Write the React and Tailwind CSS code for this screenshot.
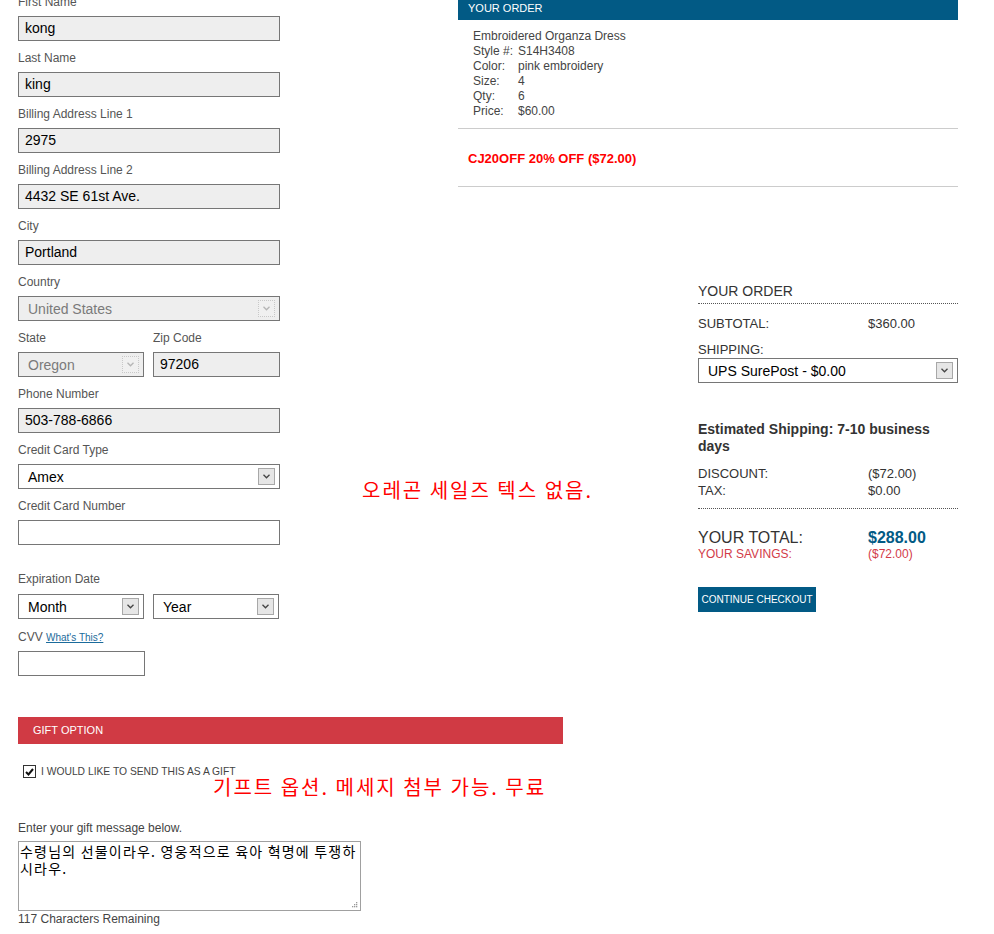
import React from 'react';

const font = { fontFamily: '"Liberation Sans", Arial, "Noto Sans CJK KR", sans-serif' };
const krFont = { fontFamily: '"Noto Sans CJK KR", sans-serif' };

const Arrow = ({ light }) => (
  <span
    className={`w-[17px] h-[17px] flex items-center justify-center border ${
      light ? 'border-dotted border-[#c8c8c8] bg-[#f0f0f0]' : 'border-[#a8a8a8] bg-[#e6e6e6]'
    }`}
  >
    <svg width="7" height="5" viewBox="0 0 7 5">
      <path d="M0.5 0.8 L3.5 3.8 L6.5 0.8" fill="none" stroke={light ? '#b5b5b5' : '#444'} strokeWidth="1.3" />
    </svg>
  </span>
);

const Field = ({ label, children, className = '' }) => (
  <div className={`mb-[9px] ${className}`}>
    <div className="h-4 leading-4 mb-[6px] text-[12px] text-[#555]">{label}</div>
    {children}
  </div>
);

const TextBox = ({ value, filled = true, className = '' }) => (
  <div
    className={`h-[25px] border border-[#767676] flex items-center px-[6px] text-[14px] text-black ${
      filled ? 'bg-[#eeeeee]' : 'bg-white'
    } ${className}`}
  >
    {value}
  </div>
);

const SelectBox = ({ value, disabled, className = '' }) => (
  <div
    className={`h-[25px] border border-[#767676] flex items-center pl-[9px] pr-[4px] text-[14px] ${
      disabled ? 'bg-[#eeeeee] text-[#7a7a7a]' : 'bg-white text-black'
    } ${className}`}
  >
    <span className="flex-1 pt-[1px]">{value}</span>
    <Arrow light={disabled} />
  </div>
);

const Row = ({ label, value, className = '' }) => (
  <div className={`flex text-[13px] leading-[17px] text-[#333] ${className}`}>
    <span className="w-[170px]">{label}</span>
    <span>{value}</span>
  </div>
);

export default function App() {
  return (
    <div className="relative w-[994px] min-h-[934px] bg-white overflow-hidden" style={font}>
      <div className="flex">
        {/* left: billing form */}
        <div className="ml-[18px] w-[262px] mt-[-6px]">
          <Field label="First Name"><TextBox value="kong" /></Field>
          <Field label="Last Name"><TextBox value="king" /></Field>
          <Field label="Billing Address Line 1"><TextBox value="2975" /></Field>
          <Field label="Billing Address Line 2"><TextBox value="4432 SE 61st Ave." /></Field>
          <Field label="City"><TextBox value="Portland" /></Field>
          <Field label="Country"><SelectBox value="United States" disabled /></Field>
          <div className="flex gap-[9px]">
            <Field label="State" className="w-[126px]"><SelectBox value="Oregon" disabled /></Field>
            <Field label="Zip Code" className="w-[127px]"><TextBox value="97206" /></Field>
          </div>
          <Field label="Phone Number"><TextBox value="503-788-6866" /></Field>
          <Field label="Credit Card Type"><SelectBox value="Amex" /></Field>
          <Field label="Credit Card Number" className="mb-[26px]"><TextBox value="" filled={false} /></Field>
          <div className="mb-[10px]">
            <div className="h-4 leading-4 mb-[7px] text-[12px] text-[#555]">Expiration Date</div>
            <div className="flex gap-[9px]">
              <SelectBox value="Month" className="w-[126px] h-[24px]" />
              <SelectBox value="Year" className="w-[126px] h-[24px]" />
            </div>
          </div>
          <div>
            <div className="h-4 leading-4 mb-[6px] text-[12px] text-[#555]">
              CVV{' '}
              <a href="#" className="text-[10px] text-[#1b6b9b] underline">What's This?</a>
            </div>
            <TextBox value="" filled={false} className="w-[127px]" />
          </div>
        </div>

        {/* right: order */}
        <div className="ml-[178px] w-[500px]">
          <div className="h-[20px] bg-[#025a85] text-white text-[11px] leading-[16px] pl-[10px]">YOUR ORDER</div>
          <div className="pl-[15px] pt-[9px] pb-[9px] text-[12px] leading-[15px] text-[#444] border-b border-[#cccccc]">
            <div>Embroidered Organza Dress</div>
            {[
              ['Style #:', 'S14H3408'],
              ['Color:', 'pink embroidery'],
              ['Size:', '4'],
              ['Qty:', '6'],
              ['Price:', '$60.00'],
            ].map(([k, v]) => (
              <div key={k} className="flex">
                <span className="w-[45px]">{k}</span>
                <span>{v}</span>
              </div>
            ))}
          </div>
          <div className="pl-[10px] pt-[22px] pb-[19px] text-[13px] leading-4 font-bold text-[#ff0000] border-b border-[#cccccc]">
            CJ20OFF 20% OFF ($72.00)
          </div>

          <div className="ml-[240px] w-[260px] mt-[96px]">
            <div className="text-[14px] leading-[17px] text-[#333] pb-[3px] border-b border-dotted border-[#555]">YOUR ORDER</div>
            <Row label="SUBTOTAL:" value="$360.00" className="mt-[11px]" />
            <div className="mt-[10px] text-[13px] leading-4 text-[#333]">SHIPPING:</div>
            <SelectBox value="UPS SurePost - $0.00" className="h-[24px]" />
            <div className="mt-[38px] text-[14px] leading-[17px] font-bold text-[#333]">
              Estimated Shipping: 7-10 business days
            </div>
            <div className="mt-[10px] pb-[9px] border-b border-dotted border-[#555]">
              <Row label="DISCOUNT:" value="($72.00)" />
              <Row label="TAX:" value="$0.00" />
            </div>
            <div className="mt-[19px] flex items-end h-[19px] text-[#333]">
              <span className="w-[170px] text-[16px] leading-[19px]">YOUR TOTAL:</span>
              <span className="text-[16px] leading-[19px] font-bold text-[#025a85]">$288.00</span>
            </div>
            <div className="flex text-[12px] leading-[14px] text-[#d23b48]">
              <span className="w-[170px]">YOUR SAVINGS:</span>
              <span>($72.00)</span>
            </div>
            <button className="mt-[26px] h-[25px] w-[118px] bg-[#025a85] text-white text-[10px] whitespace-nowrap">
              CONTINUE CHECKOUT
            </button>
          </div>
        </div>
      </div>

      {/* gift option */}
      <div className="ml-[18px] mt-[41px]">
        <div className="w-[545px] h-[27px] bg-[#d03a44] text-white text-[11px] leading-[27px] pl-[15px]">GIFT OPTION</div>
        <div className="mt-[21px] ml-[5px] flex items-center gap-[5px] h-[13px]">
          <span className="w-[13px] h-[13px] border border-[#333] bg-white flex items-center justify-center">
            <svg width="9" height="8" viewBox="0 0 9 8">
              <path d="M1 4 L3.5 6.5 L8 1" fill="none" stroke="#111" strokeWidth="2" />
            </svg>
          </span>
          <span className="text-[10.3px] leading-[13px] text-[#444]">I WOULD LIKE TO SEND THIS AS A GIFT</span>
        </div>
        <div className="mt-[42px] h-4 leading-4 text-[12px] text-[#444]">Enter your gift message below.</div>
        <div className="relative mt-[5px] w-[343px] h-[70px] border border-[#a0a0a0] px-[1px] pt-[1px] text-[14px] leading-[17px] tracking-[1.2px] break-keep text-black" style={krFont}>
          수령님의 선물이라우. 영웅적으로 육아 혁명에 투쟁하 시라우.
          <svg className="absolute right-[2px] bottom-[2px]" width="7" height="7" viewBox="0 0 7 7">
            <rect x="5" y="1" width="1.3" height="1.3" fill="#999" />
            <rect x="3" y="3" width="1.3" height="1.3" fill="#999" />
            <rect x="5" y="3" width="1.3" height="1.3" fill="#999" />
            <rect x="1" y="5" width="1.3" height="1.3" fill="#999" />
            <rect x="3" y="5" width="1.3" height="1.3" fill="#999" />
            <rect x="5" y="5" width="1.3" height="1.3" fill="#999" />
          </svg>
        </div>
        <div className="h-4 leading-4 text-[12px] text-[#444]">117 Characters Remaining</div>
      </div>

      {/* annotations */}
      <div className="absolute left-[362px] top-[480px] text-[20px] leading-5 tracking-[2px] text-[#ff0000]" style={krFont}>
        오레곤 세일즈 텍스 없음.
      </div>
      <div className="absolute left-[213px] top-[777px] text-[20px] leading-5 tracking-[2px] text-[#ff0000]" style={krFont}>
        기프트 옵션. 메세지 첨부 가능. 무료
      </div>
    </div>
  );
}
